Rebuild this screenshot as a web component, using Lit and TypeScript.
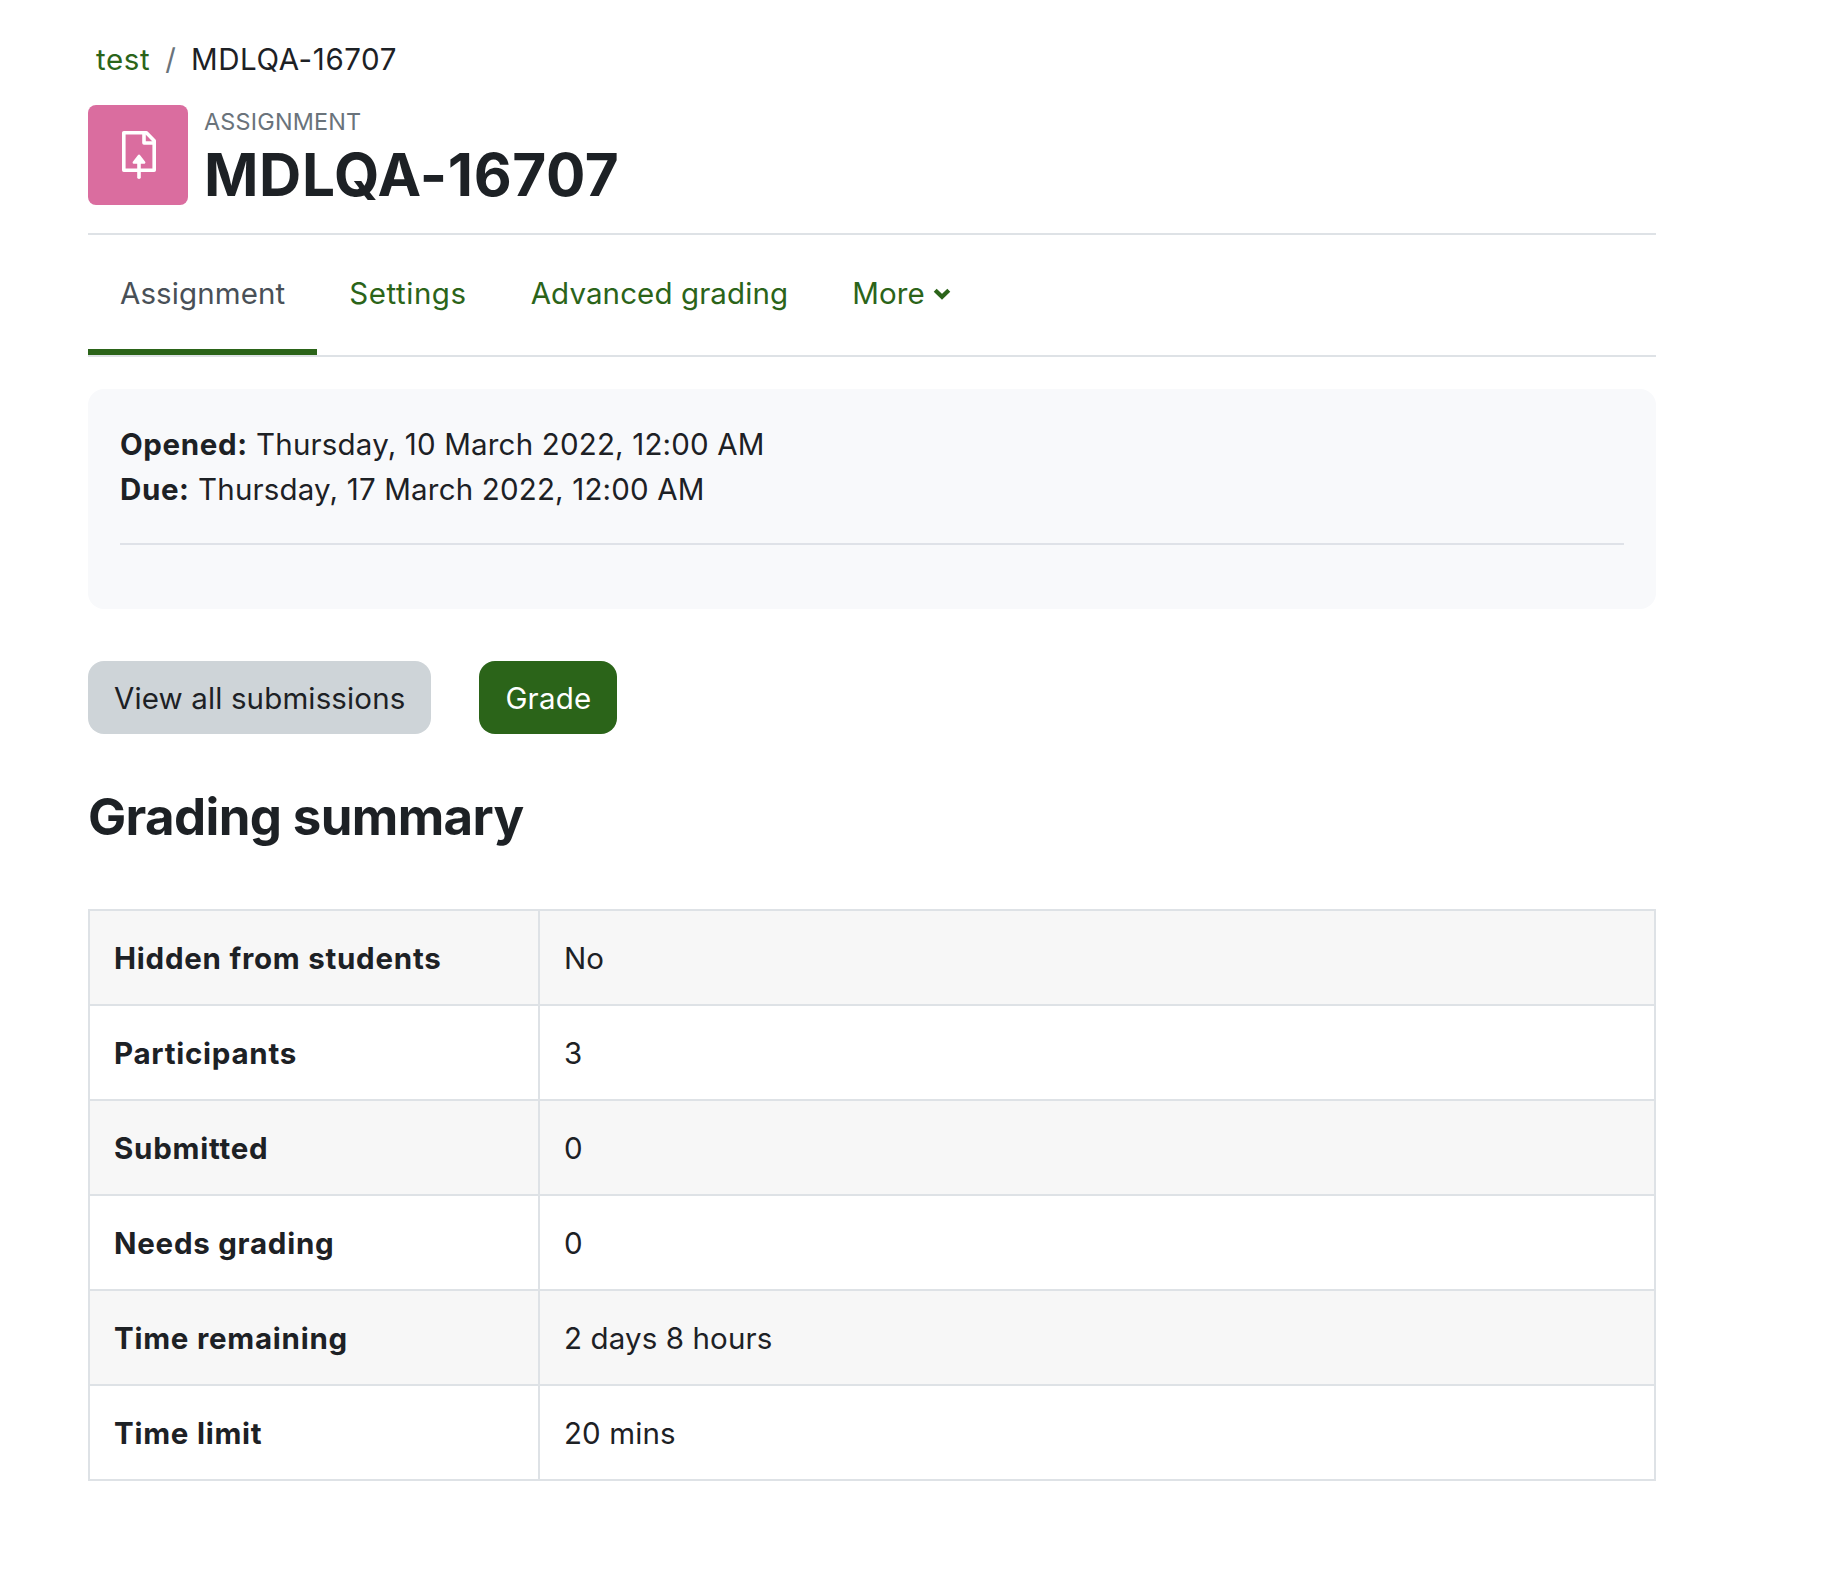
import { html, css, svg, LitElement } from 'lit';
import { customElement, property } from 'lit/decorators.js';

@customElement('activity-icon')
export class ActivityIcon extends LitElement {
  static styles = css`
    :host {
      display: block;
      width: 100px;
      height: 100px;
      border-radius: 8px;
      background-color: #da6d9f;
    }

    svg {
      display: block;
    }
  `;

  render() {
    return html`
      <svg width="100" height="100" viewBox="0 0 100 100" aria-hidden="true">
        ${svg`
          <g fill="none" stroke="#fff" stroke-width="3.6" stroke-linejoin="round">
            <path d="M35.8 27.8 H58.4 L66.2 35.8 V65.3 H35.8 Z" />
            <path d="M56 28 V38 H66" />
            <path d="M51 56 V72.2" stroke-linecap="round" />
          </g>
          <path
            d="M51 50.8 L56.2 57.6 H45.8 Z"
            fill="#fff"
            stroke="#fff"
            stroke-width="2.4"
            stroke-linejoin="round"
          />
        `}
      </svg>
    `;
  }
}

@customElement('summary-table')
export class SummaryTable extends LitElement {
  static styles = css`
    :host {
      display: block;
    }

    table {
      width: 100%;
      border-collapse: collapse;
      table-layout: fixed;
    }

    th,
    td {
      box-sizing: border-box;
      height: 95px;
      padding: 2px 24px 0;
      border: 2px solid #dee2e6;
      text-align: left;
      line-height: 45px;
    }

    th {
      width: 450px;
      font-weight: 700;
      letter-spacing: 0.75px;
    }

    td {
      letter-spacing: 0.12px;
    }

    tr:nth-child(odd) {
      background-color: #f7f7f7;
    }
  `;

  @property({ attribute: false }) rows: [string, string][] = [];

  render() {
    return html`
      <table>
        <tbody>
          ${this.rows.map(
            ([name, value]) => html`
              <tr>
                <th scope="row">${name}</th>
                <td>${value}</td>
              </tr>
            `
          )}
        </tbody>
      </table>
    `;
  }
}

@customElement('app-root')
export class AppRoot extends LitElement {
  static styles = css`
    :host {
      --text-color: #1d2125;
      --green: #2b6419;
      --border-color: #dee2e6;
      display: block;
      box-sizing: border-box;
      width: 1830px;
      height: 1592px;
      padding: 37px 174px 0 88px;
      background-color: #fff;
      color: var(--text-color);
      font-family: Inter, 'Liberation Sans', sans-serif;
      font-size: 29.5px;
      line-height: 45px;
    }

    a {
      color: var(--green);
      text-decoration: none;
    }

    .breadcrumb {
      display: flex;
      padding-left: 8px;
      letter-spacing: 0.6px;
    }

    .separator {
      padding: 0 14.5px 0 15px;
      color: #6a737b;
    }

    .header {
      display: flex;
      gap: 16px;
      height: 128px;
      margin-top: 23px;
      border-bottom: 2px solid var(--border-color);
    }

    .type {
      margin-top: 1px;
      color: #6a737b;
      font-size: 23.4px;
      line-height: 32px;
      letter-spacing: 0.2px;
      text-transform: uppercase;
    }

    h1,
    h2 {
      margin: 0;
      font-weight: 700;
    }

    h1 {
      margin-top: 1px;
      font-size: 58.5px;
      line-height: 72px;
      letter-spacing: 0.6px;
    }

    .tabs {
      display: flex;
      height: 120px;
      border-bottom: 2px solid var(--border-color);
      letter-spacing: 0.1px;
    }

    .tab {
      box-sizing: border-box;
      padding: 36px 32px 0;
      border-bottom: 6px solid transparent;
    }

    .tab.active {
      border-color: var(--green);
      color: #495057;
    }

    .tab.settings {
      letter-spacing: 0.55px;
    }

    .chevron {
      margin-left: 4px;
    }

    .dates {
      height: 187px;
      margin-top: 32px;
      padding: 33px 32px 0;
      border-radius: 16px;
      background-color: #f8f9fb;
      letter-spacing: 0.18px;
    }

    .dates hr {
      height: 2px;
      margin: 31px 0 0;
      border: 0;
      background-color: #dfe2e8;
    }

    strong {
      font-weight: 700;
      letter-spacing: 0.62px;
    }

    .actions {
      display: flex;
      gap: 48px;
      margin-top: 52px;
    }

    button {
      height: 73px;
      padding: 2px 26px 0;
      border: 0;
      border-radius: 16px;
      background-color: #ced4d8;
      color: inherit;
      font: inherit;
      letter-spacing: 0.13px;
    }

    .primary {
      background-color: var(--green);
      color: #fff;
      letter-spacing: 0.2px;
    }

    h2 {
      margin: 53px 0 62px;
      font-size: 51px;
      line-height: 60px;
      letter-spacing: -0.65px;
    }
  `;

  private rows: [string, string][] = [
    ['Hidden from students', 'No'],
    ['Participants', '3'],
    ['Submitted', '0'],
    ['Needs grading', '0'],
    ['Time remaining', '2 days 8 hours'],
    ['Time limit', '20 mins'],
  ];

  render() {
    return html`
      <nav class="breadcrumb">
        <a class="course">test</a>
        <span class="separator">/</span>
        <span class="current">MDLQA-16707</span>
      </nav>
      <header class="header">
        <activity-icon></activity-icon>
        <div>
          <div class="type">Assignment</div>
          <h1>MDLQA-16707</h1>
        </div>
      </header>
      <nav class="tabs">
        <a class="tab active">Assignment</a>
        <a class="tab settings">Settings</a>
        <a class="tab">Advanced grading</a>
        <a class="tab"
          >More<svg class="chevron" width="26" height="20" viewBox="0 0 26 20">
            <path
              d="M6.2 6.2 L13 12.8 L19.8 6.2"
              fill="none"
              stroke="currentColor"
              stroke-width="4.2"
            /></svg
        ></a>
      </nav>
      <section class="dates">
        <div><strong>Opened:</strong> Thursday, 10 March 2022, 12:00 AM</div>
        <div><strong>Due:</strong> Thursday, 17 March 2022, 12:00 AM</div>
        <hr />
      </section>
      <div class="actions">
        <button>View all submissions</button>
        <button class="primary">Grade</button>
      </div>
      <h2>Grading summary</h2>
      <summary-table .rows=${this.rows}></summary-table>
    `;
  }
}
